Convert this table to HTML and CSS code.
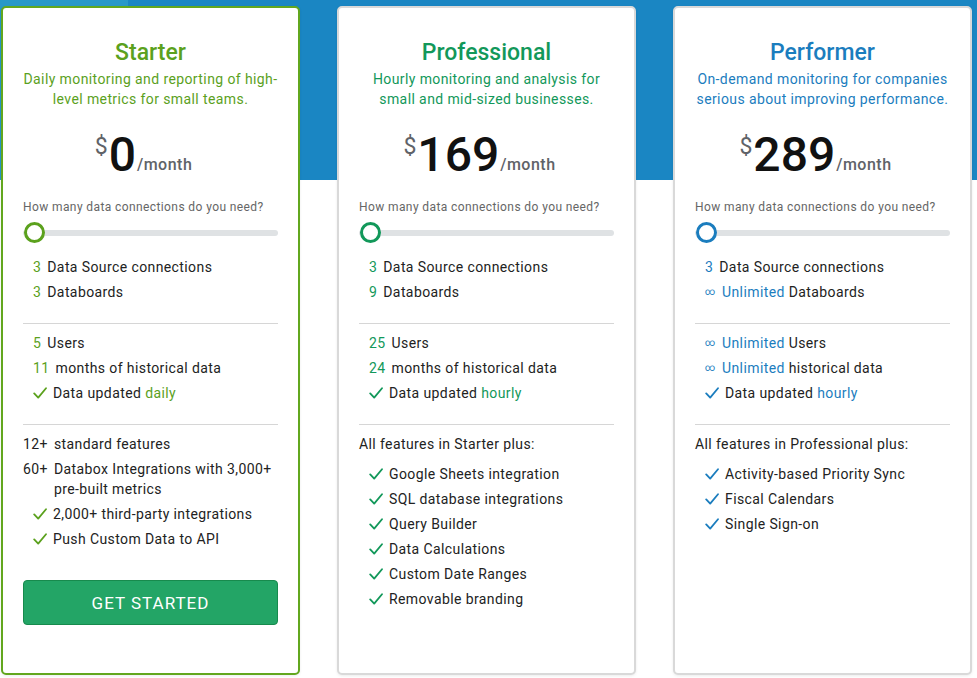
FILE: index.html
```html
<!DOCTYPE html>
<html lang="en">
<head>
<meta charset="utf-8">
<title>Pricing</title>
<link rel="stylesheet" href="styles.css">
</head>
<body>
<main class="plans">

  <section class="card card--starter">
    <header class="card-head">
      <h2 class="plan-name">Starter</h2>
      <p class="plan-desc">Daily monitoring and reporting of high-level metrics for small teams.</p>
      <div class="price"><span class="cur">$</span><span class="amount">0</span><span class="per">/month</span></div>
    </header>
    <div class="connections">
      <p class="question">How many data connections do you need?</p>
      <div class="slider"><span class="thumb"></span></div>
    </div>
    <ul class="group">
      <li class="item sub"><span class="mark">3</span><span>Data Source connections</span></li>
      <li class="item sub"><span class="mark">3</span><span>Databoards</span></li>
    </ul>
    <ul class="group">
      <li class="item sub"><span class="mark">5</span><span>Users</span></li>
      <li class="item sub"><span class="mark">11</span><span>months of historical data</span></li>
      <li class="item sub"><span class="mark"><svg class="check" viewBox="0 0 14 14"><path d="M1.2 7.4 L5.2 11.6 L13 2.2"/></svg></span><span>Data updated <span class="accent">daily</span></span></li>
    </ul>
    <ul class="group group--last">
      <li class="item"><span>12+</span><span>standard features</span></li>
      <li class="item"><span>60+</span><span>Databox Integrations with 3,000+ pre-built metrics</span></li>
      <li class="item sub"><span class="mark"><svg class="check" viewBox="0 0 14 14"><path d="M1.2 7.4 L5.2 11.6 L13 2.2"/></svg></span><span>2,000+ third-party integrations</span></li>
      <li class="item sub"><span class="mark"><svg class="check" viewBox="0 0 14 14"><path d="M1.2 7.4 L5.2 11.6 L13 2.2"/></svg></span><span>Push Custom Data to API</span></li>
    </ul>
    <button class="cta" type="button">GET STARTED</button>
  </section>

  <section class="card card--pro">
    <header class="card-head">
      <h2 class="plan-name">Professional</h2>
      <p class="plan-desc">Hourly monitoring and analysis for small and mid-sized businesses.</p>
      <div class="price"><span class="cur">$</span><span class="amount">169</span><span class="per">/month</span></div>
    </header>
    <div class="connections">
      <p class="question">How many data connections do you need?</p>
      <div class="slider"><span class="thumb"></span></div>
    </div>
    <ul class="group">
      <li class="item sub"><span class="mark">3</span><span>Data Source connections</span></li>
      <li class="item sub"><span class="mark">9</span><span>Databoards</span></li>
    </ul>
    <ul class="group">
      <li class="item sub"><span class="mark">25</span><span>Users</span></li>
      <li class="item sub"><span class="mark">24</span><span>months of historical data</span></li>
      <li class="item sub"><span class="mark"><svg class="check" viewBox="0 0 14 14"><path d="M1.2 7.4 L5.2 11.6 L13 2.2"/></svg></span><span>Data updated <span class="accent">hourly</span></span></li>
    </ul>
    <div class="group group--last">
      <p class="feat-head">All features in Starter plus:</p>
      <ul class="feat-list">
        <li class="item sub"><span class="mark"><svg class="check" viewBox="0 0 14 14"><path d="M1.2 7.4 L5.2 11.6 L13 2.2"/></svg></span><span>Google Sheets integration</span></li>
        <li class="item sub"><span class="mark"><svg class="check" viewBox="0 0 14 14"><path d="M1.2 7.4 L5.2 11.6 L13 2.2"/></svg></span><span>SQL database integrations</span></li>
        <li class="item sub"><span class="mark"><svg class="check" viewBox="0 0 14 14"><path d="M1.2 7.4 L5.2 11.6 L13 2.2"/></svg></span><span>Query Builder</span></li>
        <li class="item sub"><span class="mark"><svg class="check" viewBox="0 0 14 14"><path d="M1.2 7.4 L5.2 11.6 L13 2.2"/></svg></span><span>Data Calculations</span></li>
        <li class="item sub"><span class="mark"><svg class="check" viewBox="0 0 14 14"><path d="M1.2 7.4 L5.2 11.6 L13 2.2"/></svg></span><span>Custom Date Ranges</span></li>
        <li class="item sub"><span class="mark"><svg class="check" viewBox="0 0 14 14"><path d="M1.2 7.4 L5.2 11.6 L13 2.2"/></svg></span><span>Removable branding</span></li>
      </ul>
    </div>
  </section>

  <section class="card card--perf">
    <header class="card-head">
      <h2 class="plan-name">Performer</h2>
      <p class="plan-desc">On-demand monitoring for companies serious about improving performance.</p>
      <div class="price"><span class="cur">$</span><span class="amount">289</span><span class="per">/month</span></div>
    </header>
    <div class="connections">
      <p class="question">How many data connections do you need?</p>
      <div class="slider"><span class="thumb"></span></div>
    </div>
    <ul class="group">
      <li class="item sub"><span class="mark">3</span><span>Data Source connections</span></li>
      <li class="item sub"><span class="mark inf">∞</span><span><span class="accent">Unlimited</span> Databoards</span></li>
    </ul>
    <ul class="group">
      <li class="item sub"><span class="mark inf">∞</span><span><span class="accent">Unlimited</span> Users</span></li>
      <li class="item sub"><span class="mark inf">∞</span><span><span class="accent">Unlimited</span> historical data</span></li>
      <li class="item sub"><span class="mark"><svg class="check" viewBox="0 0 14 14"><path d="M1.2 7.4 L5.2 11.6 L13 2.2"/></svg></span><span>Data updated <span class="accent">hourly</span></span></li>
    </ul>
    <div class="group group--last">
      <p class="feat-head">All features in Professional plus:</p>
      <ul class="feat-list">
        <li class="item sub"><span class="mark"><svg class="check" viewBox="0 0 14 14"><path d="M1.2 7.4 L5.2 11.6 L13 2.2"/></svg></span><span>Activity-based Priority Sync</span></li>
        <li class="item sub"><span class="mark"><svg class="check" viewBox="0 0 14 14"><path d="M1.2 7.4 L5.2 11.6 L13 2.2"/></svg></span><span>Fiscal Calendars</span></li>
        <li class="item sub"><span class="mark"><svg class="check" viewBox="0 0 14 14"><path d="M1.2 7.4 L5.2 11.6 L13 2.2"/></svg></span><span>Single Sign-on</span></li>
      </ul>
    </div>
  </section>

</main>
</body>
</html>
```

FILE: styles.css
```css
* { box-sizing: border-box; }

html, body { margin: 0; padding: 0; }

body {
  width: 977px;
  height: 678px;
  overflow: hidden;
  font-family: Roboto, "Liberation Sans", Arial, sans-serif;
  color: #222;
  background:
    linear-gradient(to right, #2898c8 0, #2898c8 128px, transparent 128px) top left / 100% 180px no-repeat,
    linear-gradient(#1a86c3, #1a86c3) top left / 100% 180px no-repeat,
    #ffffff;
}

.plans {
  display: flex;
  gap: 37px;
  padding: 6px 0 0 1px;
}

.card {
  --accent: #5ba11d;
  width: 299px;
  height: 669px;
  background: #fff;
  border: 2px solid #d9d9d9;
  border-radius: 5px;
  padding: 0 20px;
  display: flex;
  flex-direction: column;
  box-shadow: 0 1px 3px rgba(0,0,0,0.08);
}

.card--starter { --accent: #5ba11d; border-color: #62a71e; }
.card--pro { --accent: #12985a; }
.card--perf { --accent: #1b7dbe; }

.card-head {
  padding-top: 31px;
  text-align: center;
}

.plan-name {
  margin: 0;
  font-size: 23px;
  line-height: 28px;
  font-weight: 500;
  color: var(--accent);
}

.plan-desc {
  margin: 2px 0 0;
  font-size: 14px;
  line-height: 20px;
  letter-spacing: 0.4px;
  color: var(--accent);
}

.price {
  margin-top: 22px;
  padding-right: 14px;
  line-height: 48px;
  height: 48px;
  color: #111;
}

.cur {
  font-size: 23px;
  line-height: 22px;
  color: #5f6368;
  vertical-align: 17px;
  margin-right: 1px;
}

.amount {
  font-size: 48px;
  font-weight: 500;
}

.per {
  font-size: 16px;
  font-weight: 500;
  letter-spacing: 0.5px;
  color: #5f6368;
  vertical-align: 1px;
  margin-left: 1px;
}

.connections {
  margin-top: 20px;
}

.question {
  margin: 0;
  font-size: 12px;
  line-height: 16px;
  letter-spacing: 0.4px;
  color: #666;
}

.slider {
  position: relative;
  margin-top: 15px;
  height: 6px;
  border-radius: 3px;
  background: #dfe2e4;
}

.thumb {
  position: absolute;
  left: 1px;
  top: -8px;
  width: 21px;
  height: 21px;
  border-radius: 50%;
  background: #fff;
  border: 3px solid var(--accent);
}

.group {
  list-style: none;
  margin: 0;
  padding: 9px 0 21px;
  border-bottom: 1px solid #d6d6d6;
  display: flex;
  flex-direction: column;
  gap: 5px;
}

.connections + .group {
  margin-top: 21px;
  padding-top: 0;
}

.group--last {
  border-bottom: 0;
  padding-bottom: 0;
}

.item {
  display: flex;
  gap: 6px;
  font-size: 14px;
  line-height: 20px;
  letter-spacing: 0.4px;
  color: #222;
}

.item.sub {
  padding-left: 10px;
}

.mark {
  color: var(--accent);
  flex: none;
  display: flex;
  align-items: center;
}

.mark.inf {
  font-size: 10px;
  width: 9px;
  margin-right: 2px;
  letter-spacing: 0;
}

.check {
  width: 14px;
  height: 14px;
  fill: none;
  stroke: var(--accent);
  stroke-width: 1.8;
  stroke-linecap: round;
  stroke-linejoin: round;
}

.accent { color: var(--accent); }

.feat-head {
  margin: 0;
  font-size: 14px;
  line-height: 20px;
  letter-spacing: 0.4px;
  color: #222;
}

.feat-list {
  list-style: none;
  margin: 5px 0 0;
  padding: 0;
  display: flex;
  flex-direction: column;
  gap: 5px;
}

.cta {
  margin-top: 31px;
  height: 45px;
  width: 100%;
  background: #23a566;
  border: 1px solid #178a4d;
  border-radius: 4px;
  color: #fff;
  font-family: inherit;
  font-size: 17px;
  font-weight: 400;
  letter-spacing: 1px;
  cursor: pointer;
}
```
